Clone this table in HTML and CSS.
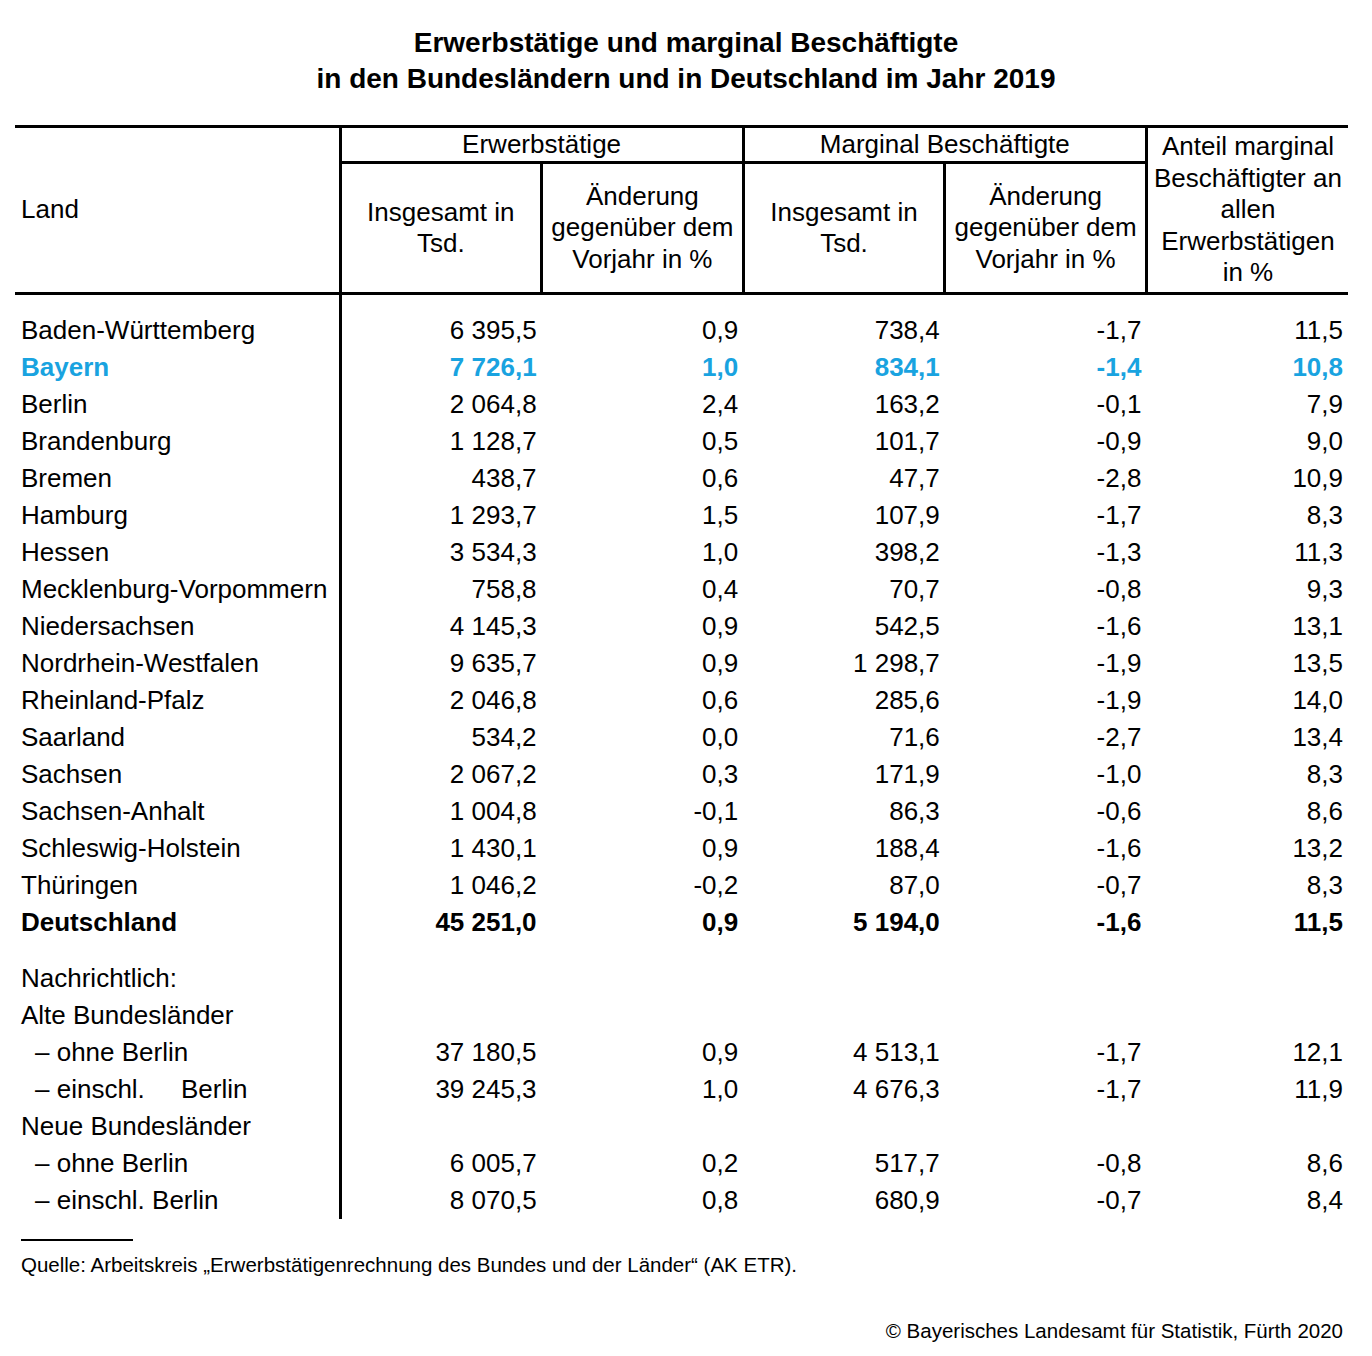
FILE: index.html
```html
<!DOCTYPE html>
<html lang="de">
<head>
<meta charset="utf-8">
<title>Erwerbstätige und marginal Beschäftigte</title>
<link rel="stylesheet" href="styles.css">
</head>
<body>
<div class="page">
  <h1 class="title">Erwerbstätige und marginal Beschäftigte<br>in den Bundesländern und in Deutschland im Jahr 2019</h1>
  <table class="data">
    <colgroup>
      <col class="c-land"><col class="c-num"><col class="c-num"><col class="c-num"><col class="c-num"><col class="c-num">
    </colgroup>
    <thead>
      <tr class="r1">
        <th class="land" rowspan="2">Land</th>
        <th colspan="2">Erwerbstätige</th>
        <th colspan="2">Marginal Beschäftigte</th>
        <th class="anteil" rowspan="2">Anteil marginal<br>Beschäftigter an<br>allen<br>Erwerbstätigen<br>in %</th>
      </tr>
      <tr class="r2">
        <th>Insgesamt in<br>Tsd.</th>
        <th>Änderung<br>gegenüber dem<br>Vorjahr in %</th>
        <th>Insgesamt in<br>Tsd.</th>
        <th>Änderung<br>gegenüber dem<br>Vorjahr in %</th>
      </tr>
    </thead>
    <tbody>
      <tr class="sp"><td class="land"></td><td></td><td></td><td></td><td></td><td></td></tr>
      <tr><td class="land">Baden-Württemberg</td><td>6 395,5</td><td>0,9</td><td>738,4</td><td>-1,7</td><td>11,5</td></tr>
      <tr class="hl"><td class="land">Bayern</td><td>7 726,1</td><td>1,0</td><td>834,1</td><td>-1,4</td><td>10,8</td></tr>
      <tr><td class="land">Berlin</td><td>2 064,8</td><td>2,4</td><td>163,2</td><td>-0,1</td><td>7,9</td></tr>
      <tr><td class="land">Brandenburg</td><td>1 128,7</td><td>0,5</td><td>101,7</td><td>-0,9</td><td>9,0</td></tr>
      <tr><td class="land">Bremen</td><td>438,7</td><td>0,6</td><td>47,7</td><td>-2,8</td><td>10,9</td></tr>
      <tr><td class="land">Hamburg</td><td>1 293,7</td><td>1,5</td><td>107,9</td><td>-1,7</td><td>8,3</td></tr>
      <tr><td class="land">Hessen</td><td>3 534,3</td><td>1,0</td><td>398,2</td><td>-1,3</td><td>11,3</td></tr>
      <tr><td class="land">Mecklenburg-Vorpommern</td><td>758,8</td><td>0,4</td><td>70,7</td><td>-0,8</td><td>9,3</td></tr>
      <tr><td class="land">Niedersachsen</td><td>4 145,3</td><td>0,9</td><td>542,5</td><td>-1,6</td><td>13,1</td></tr>
      <tr><td class="land">Nordrhein-Westfalen</td><td>9 635,7</td><td>0,9</td><td>1 298,7</td><td>-1,9</td><td>13,5</td></tr>
      <tr><td class="land">Rheinland-Pfalz</td><td>2 046,8</td><td>0,6</td><td>285,6</td><td>-1,9</td><td>14,0</td></tr>
      <tr><td class="land">Saarland</td><td>534,2</td><td>0,0</td><td>71,6</td><td>-2,7</td><td>13,4</td></tr>
      <tr><td class="land">Sachsen</td><td>2 067,2</td><td>0,3</td><td>171,9</td><td>-1,0</td><td>8,3</td></tr>
      <tr><td class="land">Sachsen-Anhalt</td><td>1 004,8</td><td>-0,1</td><td>86,3</td><td>-0,6</td><td>8,6</td></tr>
      <tr><td class="land">Schleswig-Holstein</td><td>1 430,1</td><td>0,9</td><td>188,4</td><td>-1,6</td><td>13,2</td></tr>
      <tr><td class="land">Thüringen</td><td>1 046,2</td><td>-0,2</td><td>87,0</td><td>-0,7</td><td>8,3</td></tr>
      <tr class="total"><td class="land">Deutschland</td><td>45 251,0</td><td>0,9</td><td>5 194,0</td><td>-1,6</td><td>11,5</td></tr>
      <tr class="sp2"><td class="land"></td><td></td><td></td><td></td><td></td><td></td></tr>
      <tr><td class="land">Nachrichtlich:</td><td></td><td></td><td></td><td></td><td></td></tr>
      <tr><td class="land">Alte Bundesländer</td><td></td><td></td><td></td><td></td><td></td></tr>
      <tr><td class="land ind">– ohne Berlin</td><td>37 180,5</td><td>0,9</td><td>4 513,1</td><td>-1,7</td><td>12,1</td></tr>
      <tr><td class="land ind">– einschl.&nbsp;&nbsp;&nbsp;&nbsp; Berlin</td><td>39 245,3</td><td>1,0</td><td>4 676,3</td><td>-1,7</td><td>11,9</td></tr>
      <tr><td class="land">Neue Bundesländer</td><td></td><td></td><td></td><td></td><td></td></tr>
      <tr><td class="land ind">– ohne Berlin</td><td>6 005,7</td><td>0,2</td><td>517,7</td><td>-0,8</td><td>8,6</td></tr>
      <tr><td class="land ind">– einschl. Berlin</td><td>8 070,5</td><td>0,8</td><td>680,9</td><td>-0,7</td><td>8,4</td></tr>
    </tbody>
  </table>
  <div class="foot-rule"></div>
  <p class="source">Quelle: Arbeitskreis „Erwerbstätigenrechnung des Bundes und der Länder“ (AK ETR).</p>
  <p class="copy">© Bayerisches Landesamt für Statistik, Fürth 2020</p>
</div>
</body>
</html>
```

FILE: styles.css
```css
html, body {
  margin: 0;
  padding: 0;
  background: #fff;
}

body {
  font-family: "Liberation Sans", Arial, sans-serif;
  color: #000;
}

.page {
  width: 1372px;
  padding: 25px 0 0 15px;
  box-sizing: border-box;
}

.title {
  margin: 0 0 0 -15px;
  text-align: center;
  font-size: 28px;
  font-weight: bold;
  line-height: 36px;
}

.data {
  margin-top: 28px;
  width: 1333px;
  border-collapse: collapse;
  table-layout: fixed;
  font-size: 26px;
}

.c-land { width: 325px; }
.c-num { width: 201.6px; }

.data th {
  font-weight: normal;
  text-align: center;
  vertical-align: middle;
  line-height: 31.5px;
  padding: 0;
  border-bottom: 3px solid #000;
  border-right: 3px solid #000;
}

.data .r1 th {
  border-top: 3px solid #000;
}

.data .r1 { height: 36px; }
.data .r2 { height: 131px; }

.data th.land {
  text-align: left;
  padding-left: 6px;
}

.data th.anteil {
  border-right: none;
}

.data td {
  line-height: 37px;
  padding: 0 5px 0 6px;
  text-align: right;
  white-space: nowrap;
}

.data td.land {
  text-align: left;
  border-right: 3px solid #000;
}

.data td.ind {
  padding-left: 20px;
}

.data .sp td { height: 17px; padding: 0; line-height: 0; }
.data .sp2 td { height: 19px; padding: 0; line-height: 0; }

.data .hl td {
  color: #19a3e0;
  font-weight: bold;
}

.data .total td {
  font-weight: bold;
}

.foot-rule {
  width: 112px;
  margin: 20px 0 0 6px;
  border-top: 2px solid #000;
}

.source {
  margin: 11px 0 0 6px;
  font-size: 20.5px;
  line-height: 26px;
}

.copy {
  margin: 40px 0 0 0;
  width: 1328px;
  text-align: right;
  font-size: 20.5px;
  line-height: 26px;
}
```
